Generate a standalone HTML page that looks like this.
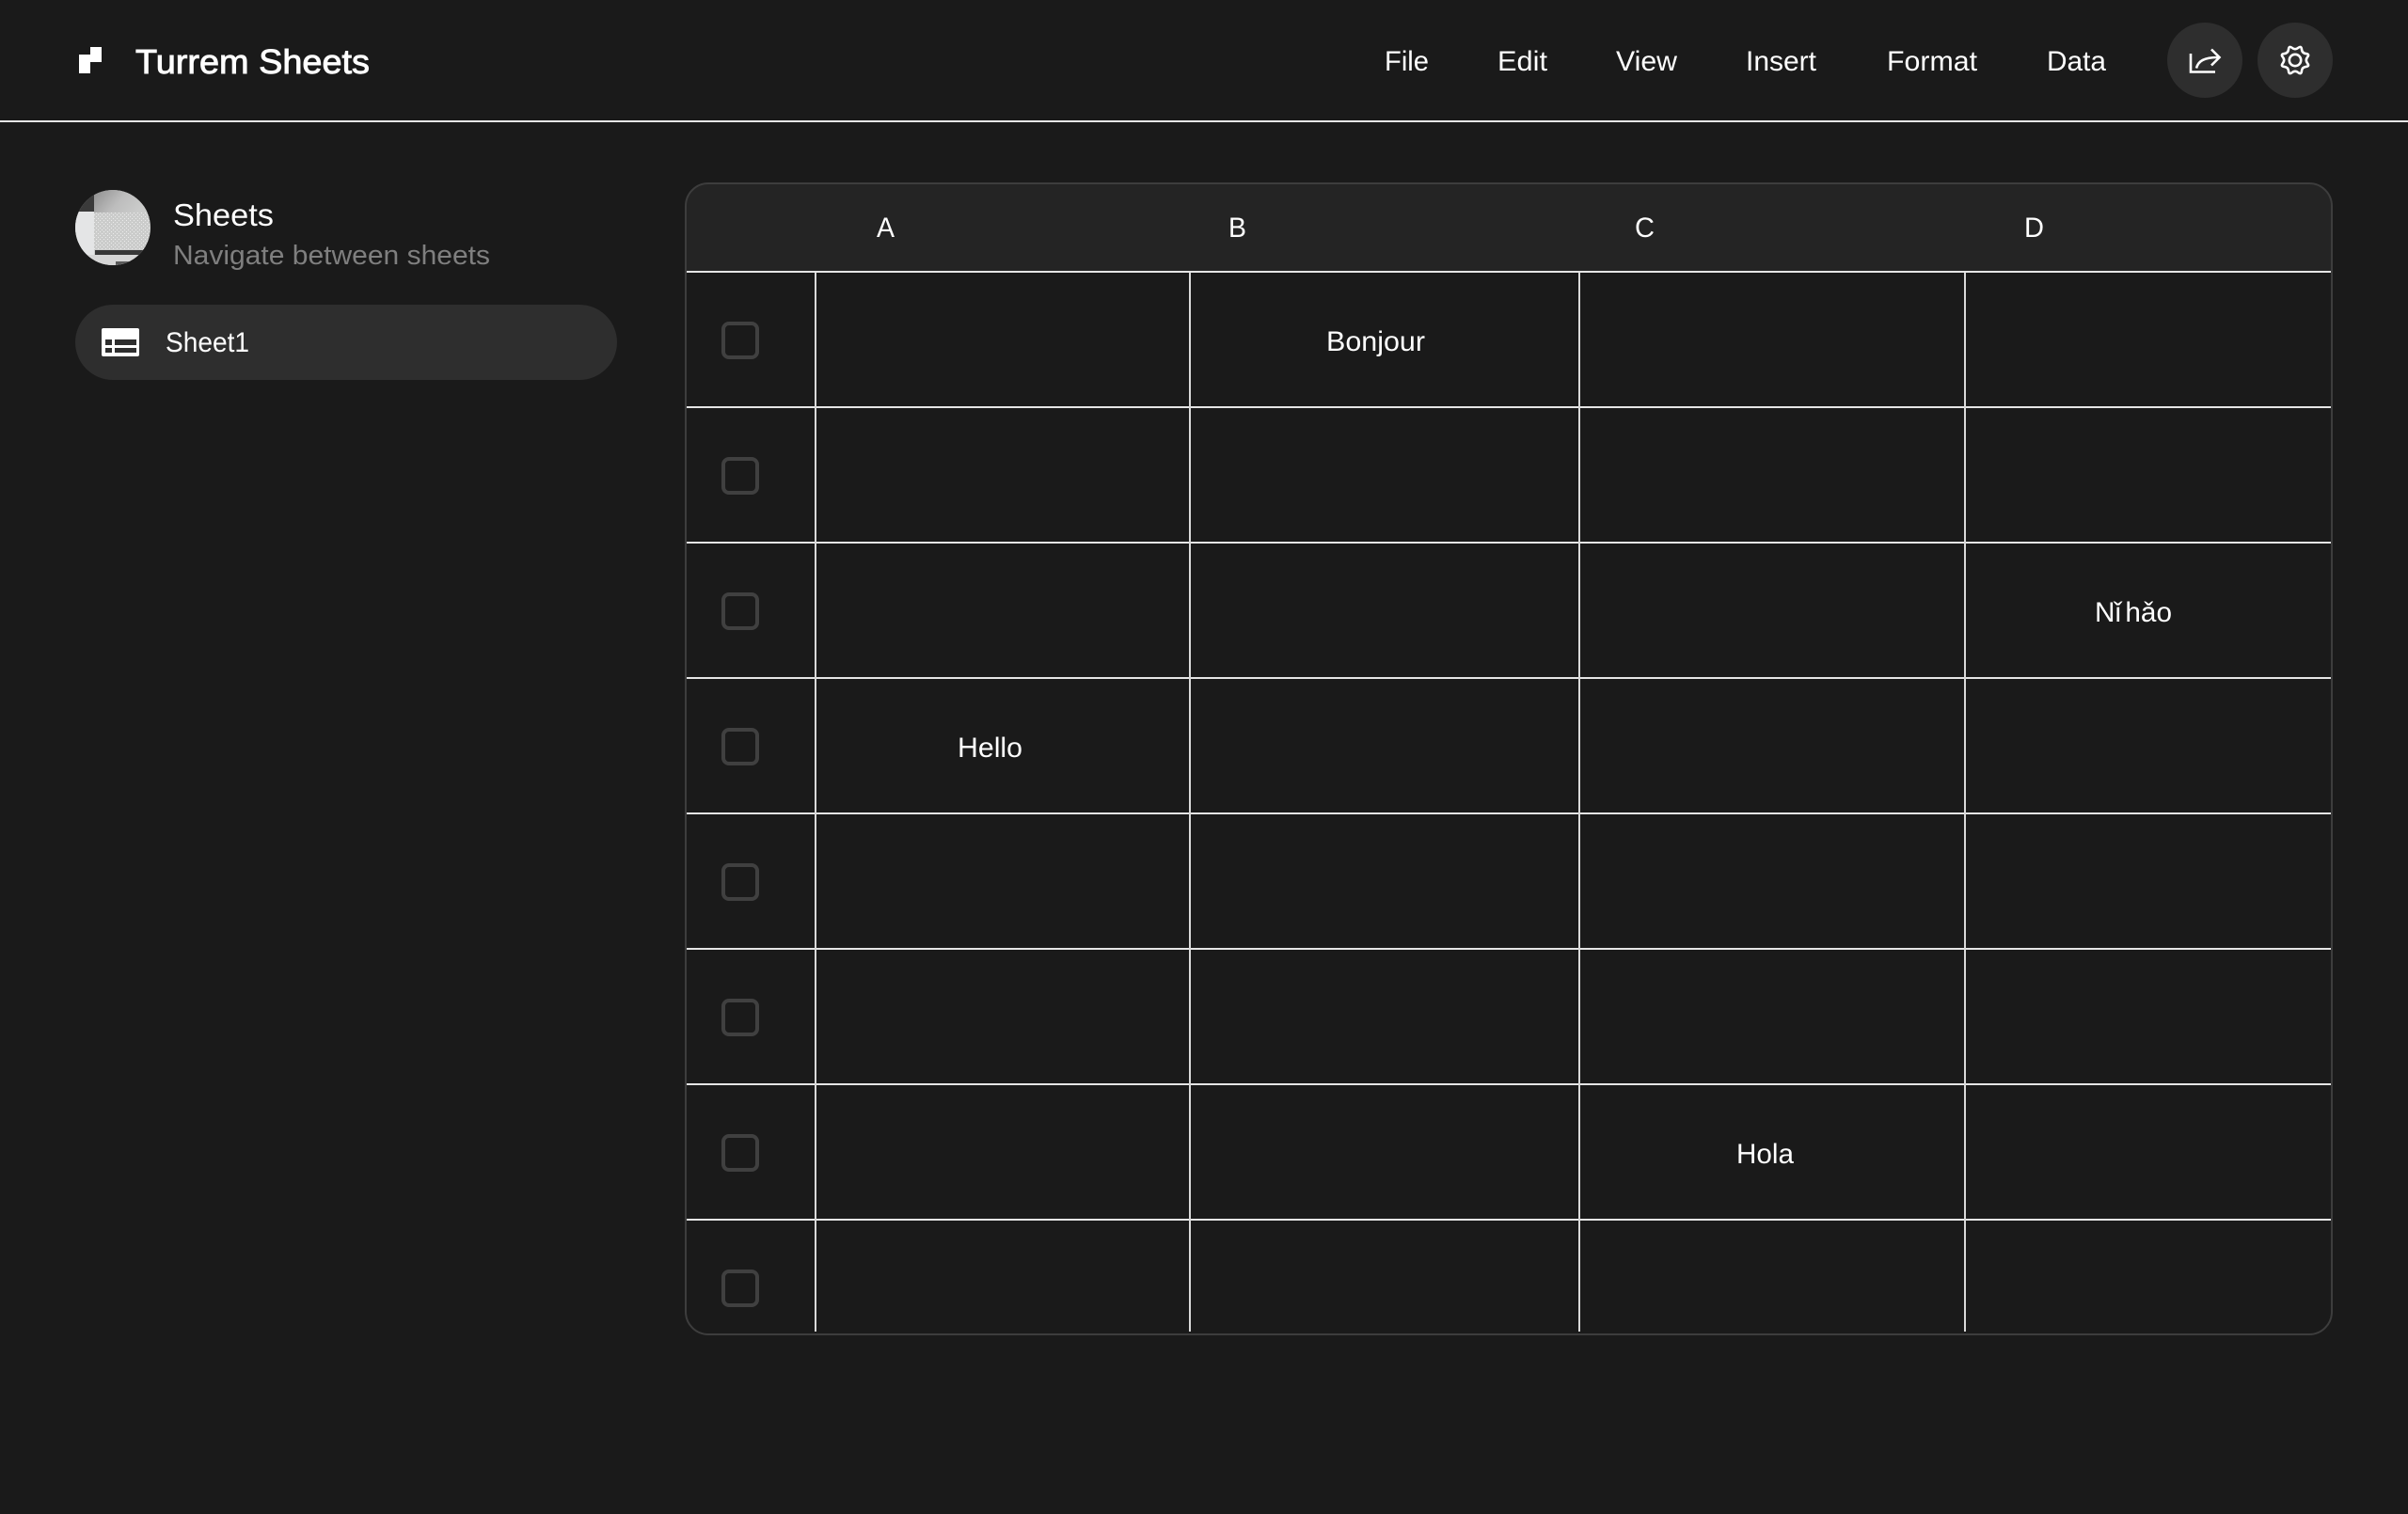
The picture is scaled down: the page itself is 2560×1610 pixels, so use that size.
<!DOCTYPE html>
<html lang="en">
<head>
<meta charset="utf-8">
<title>Turrem Sheets</title>
<style>
html,body{margin:0;padding:0;background:#1a1a1a;width:2560px;height:1610px;overflow:hidden}
svg{display:block}
text{font-family:"Liberation Sans",sans-serif;fill:#fff}
</style>
</head>
<body>
<svg width="2560" height="1610" viewBox="0 0 2560 1610" xmlns="http://www.w3.org/2000/svg">
<defs>
<linearGradient id="topfade" x1="0" y1="0" x2="1" y2="0.35">
<stop offset="0" stop-color="#8f8f8f"/>
<stop offset="0.55" stop-color="#bdbdbd"/>
<stop offset="1" stop-color="#cbcccb"/>
</linearGradient>
<pattern id="dots" width="4" height="4" patternUnits="userSpaceOnUse">
<rect width="1" height="1" fill="#ebebeb"/>
<rect x="2" y="2" width="1" height="1" fill="#ebebeb"/>
</pattern>
<clipPath id="av"><circle cx="120" cy="242" r="40"/></clipPath>
</defs>
<rect width="2560" height="1610" fill="#1a1a1a"/>
<rect x="0" y="128" width="2560" height="2" fill="#e5e5e5"/>

<!-- Logo -->
<path d="M96 50H108V66H96V78H84V58H96Z" fill="#fff"/>
<text x="144" y="78" font-size="36" stroke="#fff" stroke-width="0.9" textLength="249" lengthAdjust="spacingAndGlyphs">Turrem Sheets</text>

<!-- Nav -->
<g font-size="30">
<text x="1472" y="75" textLength="47" lengthAdjust="spacingAndGlyphs">File</text>
<text x="1592" y="75" textLength="53" lengthAdjust="spacingAndGlyphs">Edit</text>
<text x="1718" y="75" textLength="65" lengthAdjust="spacingAndGlyphs">View</text>
<text x="1856" y="75" textLength="75" lengthAdjust="spacingAndGlyphs">Insert</text>
<text x="2006" y="75" textLength="96" lengthAdjust="spacingAndGlyphs">Format</text>
<text x="2176" y="75" textLength="63" lengthAdjust="spacingAndGlyphs">Data</text>
</g>

<!-- Buttons -->
<circle cx="2344" cy="64" r="40" fill="#2e2e2e"/>
<circle cx="2440" cy="64" r="40" fill="#2e2e2e"/>
<g fill="none" stroke="#fff" stroke-width="2.6">
<path d="M2329 57V76.5H2355"/>
<path d="M2335 72.5C2337 65 2343 61 2358 61" />
<path d="M2351 52.5L2359.5 61L2351 69.5"/>
<path transform="translate(2440 64)" stroke-linejoin="round" d="M13.1,3.255Q15.7,6.51 11.56,6.965Q7.42,7.42 6.965,11.56Q6.51,15.7 3.255,13.1Q0,10.5 -3.255,13.1Q-6.51,15.7 -6.965,11.56Q-7.42,7.42 -11.56,6.965Q-15.7,6.51 -13.1,3.255Q-10.5,0 -13.1,-3.255Q-15.7,-6.51 -11.56,-6.965Q-7.42,-7.42 -6.965,-11.56Q-6.51,-15.7 -3.255,-13.1Q0,-10.5 3.255,-13.1Q6.51,-15.7 6.965,-11.56Q7.42,-7.42 11.56,-6.965Q15.7,-6.51 13.1,-3.255Q10.5,0 13.1,3.255Z"/>
<circle cx="2440" cy="64" r="6.2"/>
</g>

<!-- Avatar -->
<g clip-path="url(#av)">
<rect x="80" y="202" width="80" height="80" fill="#cbcccb"/>
<rect x="100" y="202" width="60" height="24" fill="url(#topfade)"/>
<rect x="100" y="226" width="60" height="40" fill="url(#dots)"/>
<rect x="80" y="202" width="20" height="23" fill="#3a3a3a"/>
<rect x="80" y="225" width="20" height="50" fill="#e4e5e6"/>
<rect x="101" y="266" width="59" height="5" fill="#383838"/>
<rect x="80" y="271" width="80" height="11" fill="#d6d6d6"/>
<rect x="123" y="278" width="18" height="4" fill="#5a5a5a"/>
</g>

<!-- Sidebar -->
<text x="184" y="240" font-size="33" textLength="107" lengthAdjust="spacingAndGlyphs">Sheets</text>
<text x="184" y="281" font-size="29" textLength="337" lengthAdjust="spacingAndGlyphs" style="fill:#7f7f7f">Navigate between sheets</text>
<rect x="80" y="324" width="576" height="80" rx="40" fill="#2e2e2e"/>
<path fill="#fff" fill-rule="evenodd" d="M110 349H146a2 2 0 0 1 2 2V377a2 2 0 0 1 -2 2H110a2 2 0 0 1 -2 -2V351a2 2 0 0 1 2 -2ZM112 361V367H119V361ZM122 361V367H145V361ZM112 370V375H119V370ZM122 370V375H145V370Z"/>
<text x="176" y="374" font-size="30" textLength="89" lengthAdjust="spacingAndGlyphs">Sheet1</text>

<!-- Table -->
<path d="M729 288V219a24 24 0 0 1 24 -24H2455a24 24 0 0 1 24 24V288Z" fill="#242424"/>
<rect x="729" y="195" width="1750" height="1224" rx="24" fill="none" stroke="#3d3d3d" stroke-width="2"/>
<g fill="#e5e5e5">
<rect x="730" y="288" width="1748" height="2"/>
<rect x="730" y="432" width="1748" height="2"/>
<rect x="730" y="576" width="1748" height="2"/>
<rect x="730" y="720" width="1748" height="2"/>
<rect x="730" y="864" width="1748" height="2"/>
<rect x="730" y="1008" width="1748" height="2"/>
<rect x="730" y="1152" width="1748" height="2"/>
<rect x="730" y="1296" width="1748" height="2"/>
</g>
<g fill="#d9d9d9">
<rect x="866" y="290" width="2" height="1126"/>
<rect x="1264" y="290" width="2" height="1126"/>
<rect x="1678" y="290" width="2" height="1126"/>
<rect x="2088" y="290" width="2" height="1126"/>
</g>
<g fill="none" stroke="#404040" stroke-width="4">
<rect x="769" y="344" width="36" height="36" rx="6"/>
<rect x="769" y="488" width="36" height="36" rx="6"/>
<rect x="769" y="632" width="36" height="36" rx="6"/>
<rect x="769" y="776" width="36" height="36" rx="6"/>
<rect x="769" y="920" width="36" height="36" rx="6"/>
<rect x="769" y="1064" width="36" height="36" rx="6"/>
<rect x="769" y="1208" width="36" height="36" rx="6"/>
<rect x="769" y="1352" width="36" height="36" rx="6"/>
</g>
<g font-size="30">
<text x="932" y="252" textLength="19" lengthAdjust="spacingAndGlyphs">A</text>
<text x="1306" y="252" textLength="19" lengthAdjust="spacingAndGlyphs">B</text>
<text x="1738" y="252" textLength="21" lengthAdjust="spacingAndGlyphs">C</text>
<text x="2152" y="252" textLength="21" lengthAdjust="spacingAndGlyphs">D</text>
<text x="1410" y="373" textLength="105" lengthAdjust="spacingAndGlyphs">Bonjour</text>
<text x="2227" y="661" textLength="82" lengthAdjust="spacingAndGlyphs" style="word-spacing:-4px">Nǐ hǎo</text>
<text x="1018" y="805" textLength="69" lengthAdjust="spacingAndGlyphs">Hello</text>
<text x="1846" y="1237" textLength="61" lengthAdjust="spacingAndGlyphs">Hola</text>
</g>
</svg>
</body>
</html>
